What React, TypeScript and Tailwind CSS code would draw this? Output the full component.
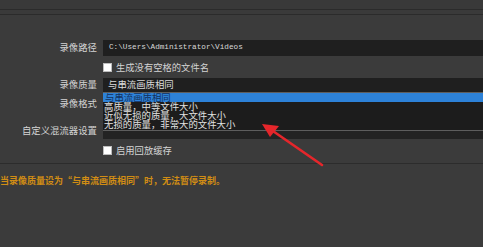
import React from 'react'

const OPTIONS = [
  '与串流画质相同',
  '高质量，中等文件大小',
  '近似无损的质量，大文件大小',
  '无损的质量，非常大的文件大小',
]

function Label({ children }: { children: React.ReactNode }) {
  return (
    <div className="flex items-center justify-end pr-[6px] text-[9.4px] leading-none text-[#d4d4d4]">
      {children}
    </div>
  )
}

function Check({ label }: { label: string }) {
  return (
    <div className="flex h-full items-center gap-[4px]">
      <span className="h-[9px] w-[9px] border border-[#bdbdbd] bg-white" />
      <span className="text-[9.3px] leading-none text-[#d4d4d4]">{label}</span>
    </div>
  )
}

export default function App() {
  return (
    <div className="relative h-[247px] w-[483px] overflow-hidden bg-[#3b3b3b] font-['Noto_Sans_CJK_SC',sans-serif]">
      {/* top bands */}
      <div className="h-[9px] bg-[#393939]" />
      <div className="h-[6px] border-y border-[#2b2b2b] bg-[#3a3a3a]" />
      <div className="h-[25px]" />

      <div className="grid grid-cols-[103px_1fr]">
        {/* 录像路径 */}
        <Label>录像路径</Label>
        <div className="flex h-[16px] items-center bg-[#1f1f1f] pl-[6px] font-['Liberation_Mono',monospace] text-[7.7px] text-[#d8d8d8]">
          C:\Users\Administrator\Videos
        </div>

        <div className="col-span-2 h-[6px]" />

        <div />
        <div className="h-[11px]">
          <Check label="生成没有空格的文件名" />
        </div>

        <div className="col-span-2 h-[5px]" />

        {/* 录像质量 */}
        <Label>录像质量</Label>
        <div className="flex h-[14px] items-center bg-[#1f1f1f] pl-[5px] text-[9.4px] leading-none text-[#dcdcdc]">
          与串流画质相同
        </div>

        {/* 录像格式 */}
        <div className="flex h-[24px] items-center justify-end pr-[6px] text-[9.4px] leading-none text-[#d4d4d4]">
          录像格式
        </div>
        <div className="h-[24px]" />

        <div className="col-span-2 h-[6px]" />

        {/* 自定义混流器设置 */}
        <Label>自定义混流器设置</Label>
        <div className="h-[17px] bg-[#232323]" />

        <div className="col-span-2 h-[7px]" />

        <div />
        <div className="h-[9px]">
          <Check label="启用回放缓存" />
        </div>
      </div>

      <div className="mt-[8px] border-t border-[#2c2c2c]" />

      <div className="flex h-[33px] items-center text-[9px] font-bold leading-none text-[#d18d14]">
        当录像质量设为“与串流画质相同”时，无法暂停录制。
      </div>

      {/* open dropdown list */}
      <div className="absolute left-[103px] right-0 top-[92px] h-[39px] border-y border-[#5e5e5e] bg-[#1c1c1c] text-[9.4px] leading-[9px]">
        <div className="h-[9px] bg-[#2d82d8] pl-[2px] text-[#14305c]">{OPTIONS[0]}</div>
        {OPTIONS.slice(1).map((o) => (
          <div key={o} className="h-[9px] pl-[1px] text-[#e2e2e2]">
            {o}
          </div>
        ))}
      </div>

      {/* red annotation arrow */}
      <svg className="absolute left-0 top-0" width="483" height="247" aria-hidden="true">
        <line x1="322" y1="165" x2="270" y2="129" stroke="#e5262b" strokeWidth="2.6" strokeLinecap="round" />
        <polygon points="262,124 279,126 270,137" fill="#e5262b" />
      </svg>
    </div>
  )
}
